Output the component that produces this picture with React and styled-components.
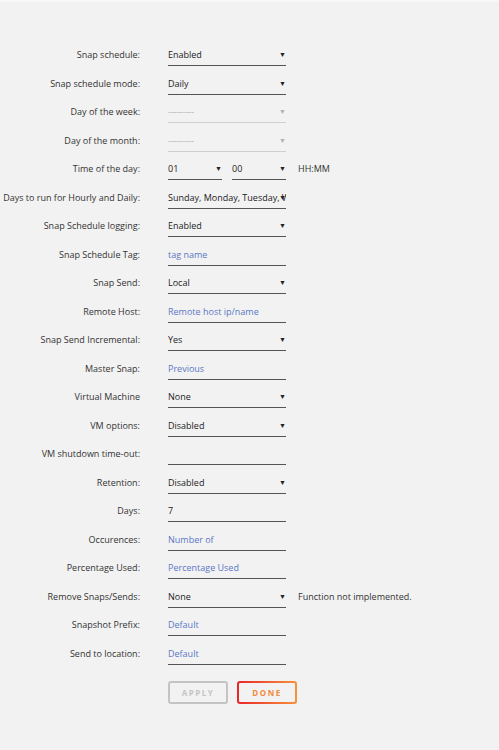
import React from 'react';
import styled, { createGlobalStyle } from 'styled-components';

const GlobalStyle = createGlobalStyle`
    html, body {
        margin: 0;
        padding: 0;
        background: #f2f2f2;
        font-family: "Open Sans", "Liberation Sans", sans-serif;
    }
`;

const Page = styled.div`
    min-height: 750px;
    box-sizing: border-box;
    border-top: 2px solid #f8f8f8;
    padding-top: 40px;
`;

const Row = styled.div`
    display: flex;
    align-items: flex-start;
    height: 28.5px;
    padding-top: 4px;
    box-sizing: border-box;
`;

const Label = styled.label`
    flex: 0 0 140px;
    margin-right: 28px;
    text-align: right;
    font-size: 9px;
    line-height: 18px;
    color: #333;
    white-space: nowrap;
`;

const Control = styled.div`
    flex: 0 0 118px;
    width: 118px;
    min-width: 0;
`;

const Field = styled.div`
    position: relative;
    height: 19px;
    border-bottom: 1px solid ${p => (p.$disabled ? '#cfcfcf' : '#555')};
    font-size: 9px;
    line-height: 18px;
    color: ${p => (p.$disabled ? '#b0b0b0' : p.$placeholder ? '#5b77c6' : '#222')};
    overflow: hidden;
    white-space: nowrap;
`;

const Arrow = styled.span`
    position: absolute;
    right: 0;
    top: 0;
    font-size: 7px;
    line-height: 18px;
    color: ${p => (p.$disabled ? '#b0b0b0' : '#222')};
`;

const TimePair = styled.div`
    display: grid;
    grid-template-columns: 1fr 1fr;
    column-gap: 10px;
`;

const Note = styled.span`
    margin-left: 12px;
    font-size: 9px;
    line-height: 18px;
    color: #333;
    white-space: nowrap;
`;

const Actions = styled.div`
    display: flex;
    gap: 9px;
    margin-top: 12px;
    padding-left: 168px;
`;

const Button = styled.button`
    width: 60px;
    height: 23px;
    box-sizing: border-box;
    border-radius: 3px;
    font-family: "Open Sans", "Liberation Sans", sans-serif;
    font-size: 8px;
    font-weight: 700;
    letter-spacing: 1.5px;
    cursor: pointer;
    padding: 0;
`;

const ApplyButton = styled(Button)`
    border: 2px solid #c4c4c4;
    background: #f2f2f2;
    color: #c4c4c4;
`;

const DoneButton = styled(Button)`
    border: 2px solid transparent;
    background:
        linear-gradient(#f2f2f2, #f2f2f2) padding-box,
        linear-gradient(90deg, #e8262a, #f7923a) border-box;
    color: #f18a3a;
`;

const Select = ({ value, disabled }) => (
    <Field $disabled={disabled}>
        {value}
        <Arrow $disabled={disabled}>▼</Arrow>
    </Field>
);

const Input = ({ value, placeholder }) => (
    <Field $placeholder={!value}>{value || placeholder}</Field>
);

const rows = [
    { label: 'Snap schedule:', el: <Select value="Enabled" /> },
    { label: 'Snap schedule mode:', el: <Select value="Daily" /> },
    { label: 'Day of the week:', el: <Select value="---------" disabled /> },
    { label: 'Day of the month:', el: <Select value="---------" disabled /> },
    {
        label: 'Time of the day:',
        el: (
            <TimePair>
                <Select value="01" />
                <Select value="00" />
            </TimePair>
        ),
        note: 'HH:MM',
    },
    { label: 'Days to run for Hourly and Daily:', el: <Select value="Sunday, Monday, Tuesday, Wednesday" /> },
    { label: 'Snap Schedule logging:', el: <Select value="Enabled" /> },
    { label: 'Snap Schedule Tag:', el: <Input placeholder="tag name" /> },
    { label: 'Snap Send:', el: <Select value="Local" /> },
    { label: 'Remote Host:', el: <Input placeholder="Remote host ip/name" /> },
    { label: 'Snap Send Incremental:', el: <Select value="Yes" /> },
    { label: 'Master Snap:', el: <Input placeholder="Previous" /> },
    { label: 'Virtual Machine', el: <Select value="None" /> },
    { label: 'VM options:', el: <Select value="Disabled" /> },
    { label: 'VM shutdown time-out:', el: <Input placeholder="" /> },
    { label: 'Retention:', el: <Select value="Disabled" /> },
    { label: 'Days:', el: <Input value="7" /> },
    { label: 'Occurences:', el: <Input placeholder="Number of" /> },
    { label: 'Percentage Used:', el: <Input placeholder="Percentage Used" /> },
    { label: 'Remove Snaps/Sends:', el: <Select value="None" />, note: 'Function not implemented.' },
    { label: 'Snapshot Prefix:', el: <Input placeholder="Default" /> },
    { label: 'Send to location:', el: <Input placeholder="Default" /> },
];

const App = () => (
    <Page>
        <GlobalStyle />
        {rows.map((r, i) => (
            <Row key={i}>
                <Label>{r.label}</Label>
                <Control>{r.el}</Control>
                {r.note && <Note>{r.note}</Note>}
            </Row>
        ))}
        <Actions>
            <ApplyButton>APPLY</ApplyButton>
            <DoneButton>DONE</DoneButton>
        </Actions>
    </Page>
);

export default App;
